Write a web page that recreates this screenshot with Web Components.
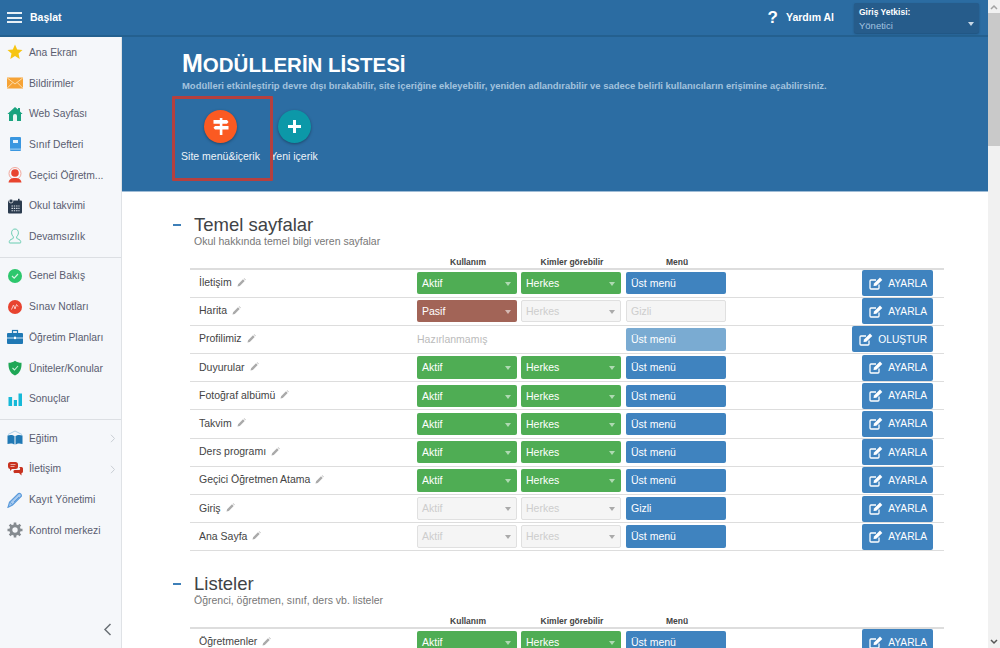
<!DOCTYPE html>
<html lang="tr">
<head>
<meta charset="utf-8">
<title>Modüllerin listesi</title>
<style>
  html, body { margin: 0; height: 100%; overflow: hidden; }
  body { font-family: "Liberation Sans", Arial, sans-serif; background: #fff; }
</style>
</head>
<body>
<app-shell>
  <top-bar slot="top"></top-bar>
  <side-nav slot="side"></side-nav>
  <page-header></page-header>
  <module-section heading="Temel sayfalar" sub="Okul hakkında temel bilgi veren sayfalar">
    <module-row name="İletişim" use="Aktif" who="Herkes" menu="Üst menü"></module-row>
    <module-row name="Harita" use="Pasif" who="Herkes" who-off menu="Gizli" menu-off></module-row>
    <module-row name="Profilimiz" use="Hazırlanmamış" menu="Üst menü" menu-soft action="OLUŞTUR"></module-row>
    <module-row name="Duyurular" use="Aktif" who="Herkes" menu="Üst menü"></module-row>
    <module-row name="Fotoğraf albümü" use="Aktif" who="Herkes" menu="Üst menü"></module-row>
    <module-row name="Takvim" use="Aktif" who="Herkes" menu="Üst menü"></module-row>
    <module-row name="Ders programı" use="Aktif" who="Herkes" menu="Üst menü"></module-row>
    <module-row name="Geçici Öğretmen Atama" use="Aktif" who="Herkes" menu="Üst menü"></module-row>
    <module-row name="Giriş" use="Aktif" use-off who="Herkes" who-off menu="Gizli"></module-row>
    <module-row name="Ana Sayfa" use="Aktif" use-off who="Herkes" who-off menu="Üst menü"></module-row>
  </module-section>
  <module-section heading="Listeler" sub="Öğrenci, öğretmen, sınıf, ders vb. listeler">
    <module-row name="Öğretmenler" use="Aktif" who="Herkes" menu="Üst menü"></module-row>
  </module-section>
</app-shell>

<script>
const ICONS = {
  star: `<path fill="#f7c511" d="M8 .6l2.2 4.9 5.3.5-4 3.6 1.2 5.3L8 12.1l-4.7 2.8 1.2-5.3-4-3.6 5.3-.5z"/>`,
  mail: `<rect y="2.5" width="16" height="11" fill="#f6a336"/><path fill="none" stroke="#fde3b8" stroke-width=".9" d="M.3 3L8 9l7.7-6M.3 13l5.5-5.5M15.700 13l-5.5-5.5"/>`,
  home: `<path fill="#1aa37f" d="M8 1l3 2.6V2h2v3.4L15.600 8H14v7H2V8H.4z"/><path fill="#e9f6f2" d="M6 10a2 2 0 0 1 4 0v5H6z"/>`,
  book: `<rect x="3" y="1" width="11" height="14" rx="1" fill="#3a97e0"/><rect x="3" y="12.6" width="11" height="1" fill="#a9d4f5"/><rect x="6" y="4" width="5" height="3" fill="#e5f3fd"/>`,
  person: `<circle cx="8" cy="6.5" r="6" fill="none" stroke="#f2a79c" stroke-width="1"/><circle cx="8" cy="6" r="3.8" fill="#e8442f"/><path fill="#e8442f" d="M1.500 15.500c.3-3.400 3-4.600 6.500-4.600s6.200 1.200 6.500 4.600z"/>`,
  cal: `<rect x="1" y="2.5" width="14" height="13" rx="1" fill="#2b3b4e"/><circle cx="4" cy="3" r="2" fill="#2b3b4e" stroke="#fff" stroke-width=".7"/><rect x="11" y=".8" width="1.6" height="3" fill="#2b3b4e"/><path fill="none" stroke="#dfe4ea" stroke-width="1.1" stroke-dasharray="1.4 .9" d="M4.500 8h8M4.500 10.400h8M4.500 12.800h8"/>`,
  user: `<path fill="none" stroke="#69cdb2" stroke-width="1" d="M8 1c2.300 0 3.400 1.800 3.400 3.800 0 1.900-1 3.100-1.700 3.900v1.600c1 .8 3.600 1.200 4 3.100.1.8-.2 1.600-.2 1.600H2.500s-.3-.8-.2-1.600c.4-1.900 3-2.300 4-3.100V8.700c-.7-.8-1.700-2-1.700-3.900C4.600 2.800 5.700 1 8 1z"/>`,
  ok: `<circle cx="8" cy="8" r="7" fill="#2dc76d"/><path fill="none" stroke="#d6f5e2" stroke-width="1.2" d="M5 8l2.200 2.200L11 6"/>`,
  grade: `<circle cx="8" cy="8" r="7" fill="#e8432f"/><path fill="none" stroke="#f9c9c2" stroke-width="1" d="M4.500 10.500L6.500 6l1.500 4 1.500-4.500 1.500 2"/>`,
  case: `<rect x="5.5" y="1.5" width="5" height="3" fill="none" stroke="#1f78b4" stroke-width="1.2"/><rect y="4" width="16" height="11" rx="1" fill="#1f78b4"/><rect y="8.5" width="16" height="1" fill="#cfe4f3"/><rect x="7" y="7.7" width="2" height="2.4" fill="#fff"/>`,
  shield: `<path fill="#1fa756" d="M8 .8c2 1.400 4 2 6.500 2 .3 6-1.500 10.500-6.500 12.800C3 13.300 1.200 8.800 1.500 2.800 4 2.800 6 2.200 8 .8z"/><path fill="none" stroke="#c9f0d8" stroke-width="1.1" d="M5.500 8l2 2L11 6"/>`,
  bars: `<path fill="#16b9d8" d="M1.500 6h3.600v9H1.500zM6.800 9h3.200v6H6.800zM11.500 2.500H15V15h-3.500z"/>`,
  edu: `<path fill="none" stroke="#9cc6e3" stroke-width=".8" d="M1 4.500L8 1l7 3.500"/><path fill="#1f78b4" d="M.5 5.500c3-1 5.500-.6 7 .6v8.400c-1.500-1.200-4-1.500-7-.6zM15.500 5.500c-3-1-5.500-.6-7 .6v8.400c1.500-1.200 4-1.500 7-.6z"/>`,
  chat: `<path fill="#c8321f" d="M1 3.500A2.500 2.500 0 0 1 3.500 1h5A2.500 2.500 0 0 1 11 3.500v2A2.500 2.500 0 0 1 8.500 8H5l-2 2V8A2.500 2.500 0 0 1 1 5.500z"/><path fill="#c8321f" d="M7.500 9h5A2 2 0 0 0 12 6h2.500A1.500 1.500 0 0 1 16 7.500v3a1.500 1.500 0 0 1-1.500 1.500v2.500L12 12H8.500A1.500 1.500 0 0 1 7.500 9z"/><path stroke="#f4c8c1" stroke-width=".8" d="M3.500 3.500h5M3.500 5.500h4"/>`,
  pen: `<path fill="#a9cbef" stroke="#5b9bdb" stroke-width="1.2" d="M1 15.300l1.500-5L11.500 1.500c1.500-.8 3.200.9 2.800 2.700L5.500 13z"/><path fill="none" stroke="#5b9bdb" stroke-width="1" d="M2.500 10.300c1 .2 2.500 1.300 3 2.700M5 8l5-5M7 10l5-5"/>`,
  gear: `<circle cx="8" cy="8" r="4.200" fill="none" stroke="#858b90" stroke-width="3"/><path stroke="#858b90" stroke-width="2.6" d="M8 .5v3M8 12.500v3M.5 8h3M12.500 8h3M2.700 2.700l2.100 2.100M11.200 11.200l2.100 2.100M2.700 13.300l2.100-2.100M11.200 4.800l2.100-2.100"/>`
};

class AppShell extends HTMLElement {
  connectedCallback() {
    this.attachShadow({ mode: "open" }).innerHTML = /*html*/ `
      <style>
        :host { display: grid; grid-template: "top top bar" 37px "side main bar" 611px / 122px 866px 12px; height: 648px; overflow: hidden; }
        .top { grid-area: top; }
        .side { grid-area: side; }
        main { grid-area: main; overflow: hidden; background: #fff; }
        .bar { grid-area: bar; background: #f1f1f1; display: grid; grid-template-rows: 13px 133px 1fr 13px; justify-items: center; align-items: center; }
        .bar i { display: block; width: 12px; height: 100%; background: #c9c9c9; }
      </style>
      <div class="top"><slot name="top"></slot></div>
      <div class="side"><slot name="side"></slot></div>
      <main><slot></slot></main>
      <div class="bar">
        <svg width="8" height="6" viewBox="0 0 8 6"><path d="M1 5l3-3 3 3" fill="none" stroke="#a3a3a3" stroke-width="1.5"/></svg>
        <i></i>
        <span></span>
        <svg width="8" height="6" viewBox="0 0 8 6"><path d="M1 1l3 3 3-3" fill="none" stroke="#555" stroke-width="1.5"/></svg>
      </div>`;
  }
}

class TopBar extends HTMLElement {
  connectedCallback() {
    this.attachShadow({ mode: "open" }).innerHTML = /*html*/ `
      <style>
        :host { display: flex; align-items: center; height: 37px; box-sizing: border-box; background: #2b6ca2; color: #fff; box-shadow: inset 0 -2px 0 #24608f; padding: 0 9px 1px 7px; }
        .burger { display: grid; gap: 2.5px; width: 15px; margin-right: 8px; margin-bottom: 1px; }
        .burger i { display: block; height: 2px; background: #e8f0f6; }
        .start { font-size: 10.5px; font-weight: bold; flex: 1; margin-bottom: 2px; }
        .help { font-size: 17px; font-weight: bold; margin-right: 8px; }
        .helptext { font-size: 10.5px; font-weight: bold; margin-right: 20px; margin-bottom: 2px; }
        .role { width: 125px; height: 30px; box-sizing: border-box; background: #265c8b; border-radius: 2px; padding: 3.5px 5px; position: relative; font-size: 9.5px; box-shadow: 0 1px 2px #1f507a; }
        .role b { display: block; line-height: 11px; font-size: 8.5px; }
        .role span { display: block; color: #a3c3e0; line-height: 15px; }
        .role i { position: absolute; right: 5px; bottom: 7px; border: 3.5px solid transparent; border-top: 4px solid #c8d8e6; border-bottom: 0; }
      </style>
      <div class="burger"><i></i><i></i><i></i></div>
      <div class="start">Başlat</div>
      <div class="help">?</div>
      <div class="helptext">Yardım Al</div>
      <div class="role"><b>Giriş Yetkisi:</b><span>Yönetici</span><i></i></div>`;
  }
}

class SideNav extends HTMLElement {
  groups = [
    [["star", "Ana Ekran"], ["mail", "Bildirimler"], ["home", "Web Sayfası"], ["book", "Sınıf Defteri"], ["person", "Geçici Öğretm..."], ["cal", "Okul takvimi"], ["user", "Devamsızlık"]],
    [["ok", "Genel Bakış"], ["grade", "Sınav Notları"], ["case", "Öğretim Planları"], ["shield", "Üniteler/Konular"], ["bars", "Sonuçlar"]],
    [["edu", "Eğitim", 1], ["chat", "İletişim", 1], ["pen", "Kayıt Yönetimi"], ["gear", "Kontrol merkezi"]],
  ];

  connectedCallback() {
    const item = ([icon, label, more]) => /*html*/ `
      <a>
        <svg width="16" height="16" viewBox="0 0 16 16">${ICONS[icon]}</svg>
        <span>${label}</span>
        ${more ? `<svg class="more" width="6" height="9" viewBox="0 0 6 9"><path d="M1 .8l3.500 3.700L1 8.200" fill="none" stroke="#c9ced4"/></svg>` : ""}
      </a>`;
    this.attachShadow({ mode: "open" }).innerHTML = /*html*/ `
      <style>
        :host { display: flex; flex-direction: column; height: 611px; box-sizing: border-box; background: #f5f7fa; border-right: 1px solid #dfe2e6; color: #5a5d70; font-size: 10.3px; }
        section { padding: 0 0 5px; border-bottom: 1px solid #dcdfe3; margin-bottom: 2.8px; }
        section:first-child { margin-top: -.3px; }
        section:last-of-type { border: 0; }
        a { display: flex; align-items: center; height: 30.7px; padding-left: 7px; position: relative; }
        a span { margin-left: 6px; white-space: nowrap; }
        .more { position: absolute; right: 5px; top: 11px; }
        .collapse { margin-top: auto; align-self: flex-end; margin-right: 9px; margin-bottom: 12px; }
      </style>
      ${this.groups.map((g) => `<section>${g.map(item).join("")}</section>`).join("")}
      <svg class="collapse" width="9" height="13" viewBox="0 0 9 13"><path d="M7.500 1L2 6.500 7.500 12" fill="none" stroke="#6b7076" stroke-width="1.5"/></svg>`;
  }
}

class PageHeader extends HTMLElement {
  connectedCallback() {
    this.attachShadow({ mode: "open" }).innerHTML = /*html*/ `
      <style>
        :host { display: block; height: 155px; box-sizing: border-box; background: #2c6da3; border-bottom: 1px solid #9fbcd6; padding: 12px 0 0 60px; color: #fff; position: relative; }
        h1 { margin: 0; font-size: 20.5px; line-height: 28px; font-weight: bold; text-transform: uppercase; color: #fff; }
        h1::first-letter { font-size: 25px; }
        p { margin: 1px 0 0; font-size: 9.45px; font-weight: bold; color: #a3c3de; line-height: 12px; }
        .actions { display: flex; margin-top: 18px; }
        .act { display: flex; flex-direction: column; align-items: center; font-size: 10.5px; width: 77px; color: #eef4f9; }
        .act:last-child { width: 50px; margin-left: 10px; }
        .circle { width: 33px; height: 33px; border-radius: 50%; display: grid; place-items: center; box-shadow: 0 1px 3px rgba(0,0,0,.35); margin-bottom: 7px; }
        .act span { white-space: nowrap; }
        .mark { position: absolute; left: 50px; top: 59px; width: 101px; height: 85px; box-sizing: border-box; border: 3px solid #b5403f; border-radius: 1px; }
      </style>
      <h1 lang="tr">Modüllerin listesi</h1>
      <p>Modülleri etkinleştirip devre dışı bırakabilir, site içeriğine ekleyebilir, yeniden adlandırabilir ve sadece belirli kullanıcıların erişimine açabilirsiniz.</p>
      <div class="actions">
        <div class="act">
          <div class="circle" style="background:#fb5a22">
            <svg width="16" height="17" viewBox="0 0 16 17"><path fill="#fff" d="M.5 2h13.500L15.500 3.900 14 5.800H.5zM15.500 8H2L.5 9.700 2 11.400h13.500z"/><rect x="6.800" y="0" width="2.600" height="17" fill="#fff"/></svg>
          </div>
          <span>Site menü&amp;içerik</span>
        </div>
        <div class="act">
          <div class="circle" style="background:#0c98a8">
            <svg width="13" height="13" viewBox="0 0 13 13"><path fill="#fff" d="M5 0h3v5h5v3H8v5H5V8H0V5h5z"/></svg>
          </div>
          <span>Yeni içerik</span>
        </div>
      </div>
      <div class="mark"></div>`;
  }
}

class ModuleSection extends HTMLElement {
  connectedCallback() {
    this.attachShadow({ mode: "open" }).innerHTML = /*html*/ `
      <style>
        :host { display: block; padding: 23px 44px 0 68px; color: #333; }
        header { position: relative; margin-bottom: 9.5px; margin-left: 4px; }
        header::before { content: ""; position: absolute; left: -21px; top: 9px; width: 8px; height: 2px; background: #3d7fb8; }
        h2 { margin: 0; font-size: 18.5px; line-height: 20px; font-weight: normal; color: #3f4346; }
        p { margin: 0; font-size: 10.5px; line-height: 12px; color: #777; }
        .heads { display: grid; grid-template-columns: 228px 100px 4px 100px 5px 100px; font-size: 8.5px; font-weight: bold; text-align: center; line-height: 11px; height: 11px; border-bottom: 2px solid #ddd; color: #444; }
      </style>
      <header><h2>${this.getAttribute("heading")}</h2><p>${this.getAttribute("sub")}</p></header>
      <div class="heads"><span></span><span>Kullanım</span><span></span><span>Kimler görebilir</span><span></span><span>Menü</span></div>
      <slot></slot>`;
  }
}

class ModuleRow extends HTMLElement {
  connectedCallback() {
    const a = (n) => this.getAttribute(n);
    const has = (n) => this.hasAttribute(n);
    const use = a("use");
    const select = (text, cls) => `<div class="sel ${cls}">${text}<i></i></div>`;
    const useCell = use === "Hazırlanmamış"
      ? `<div class="none">${use}</div>`
      : select(use, has("use-off") ? "off" : use === "Pasif" ? "red" : "green");
    const whoCell = a("who") ? select(a("who"), has("who-off") ? "off" : "green") : "<div></div>";
    const menuCls = has("menu-off") ? "off" : has("menu-soft") ? "soft" : "blue";
    this.attachShadow({ mode: "open" }).innerHTML = /*html*/ `
      <style>
        :host { display: block; height: 28.2px; box-sizing: border-box; border-bottom: 1px solid #ddd; }
        .row { display: grid; grid-template-columns: 227px 100px 100px 100px 1fr; align-items: center; height: 27px; font-size: 10.5px; color: #444; }
        .name { padding: 0 0 2px 9px; display: flex; align-items: center; gap: 5px; white-space: nowrap; }
        .sel { position: relative; height: 22.5px; line-height: 22.5px; box-sizing: border-box; padding-left: 5px; border-radius: 2px; font-size: 10.5px; color: #fff; }
        .sel:nth-child(3) { margin-left: 4px; width: 100px; }
        .sel.menu { margin-left: 9px; width: 100px; }
        .green { background: #4fad54; }
        .red { background: #a26457; }
        .blue { background: #3f83bf; }
        .soft { background: #7aabd2; }
        .off { background: #f5f5f5; border: 1px solid #e0e0e0; color: #cdcdcd; line-height: 20.5px; padding-left: 4px; }
        .sel i { position: absolute; right: 6px; top: 10px; border: 3.5px solid transparent; border-top: 4px solid rgba(255,255,255,.55); border-bottom: 0; }
        .off i { border-top-color: #aaa; top: 9px; right: 5px; }
        .menu i { display: none; }
        .none { color: #bbb; }
        button { justify-self: end; margin-right: 11px; height: 26px; border: 0; border-radius: 2px; background: #3f83bf; color: #fff; font: 10.2px "Liberation Sans", Arial, sans-serif; display: flex; align-items: center; gap: 5px; padding: 0 6px 0 7px; white-space: nowrap; }
      </style>
      <div class="row">
        <div class="name">${a("name")}
          <svg width="9" height="9" viewBox="0 0 9 9"><path fill="#aaa" d="M.5 8.500l.6-2.300L6 1.300l1.700 1.700-4.900 4.900zM6.700.6l.5-.4 1.600 1.600-.4.500z"/></svg>
        </div>
        ${useCell}
        ${whoCell}
        <div class="sel menu ${menuCls}">${a("menu")}</div>
        <button>
          <svg width="14" height="13" viewBox="0 0 14 13"><path fill="none" stroke="#fff" stroke-width="1.3" d="M10 7.500V11a1 1 0 0 1-1 1H2a1 1 0 0 1-1-1V4a1 1 0 0 1 1-1h5"/><path fill="#fff" d="M4.500 9l.5-2.500L11 .6 13.300 3l-6 5.800z"/></svg>
          ${a("action") || "AYARLA"}
        </button>
      </div>`;
  }
}

customElements.define("app-shell", AppShell);
customElements.define("top-bar", TopBar);
customElements.define("side-nav", SideNav);
customElements.define("page-header", PageHeader);
customElements.define("module-section", ModuleSection);
customElements.define("module-row", ModuleRow);
</script>
</body>
</html>
